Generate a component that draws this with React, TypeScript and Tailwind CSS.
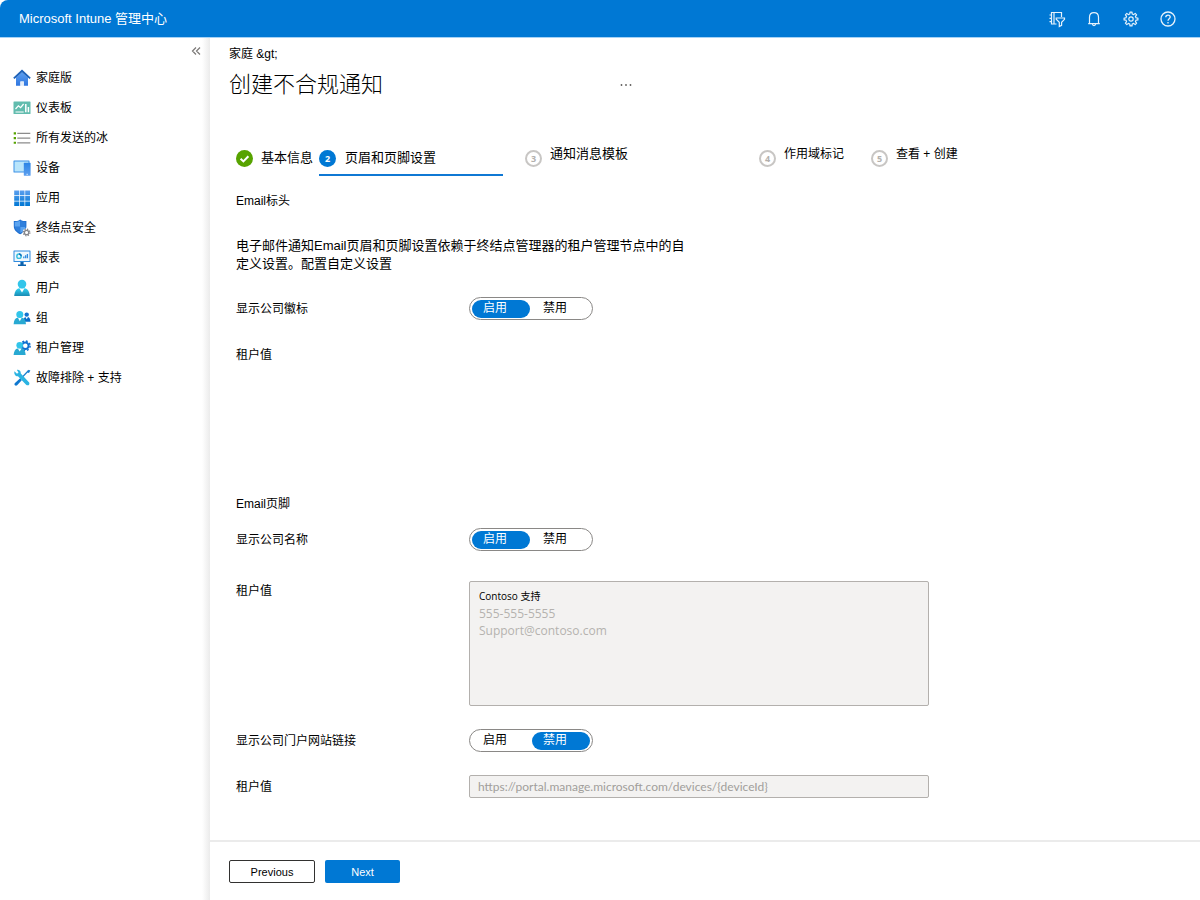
import { useId, useState, type ReactNode } from 'react';

type NavItem = { label: string; icon: ReactNode };

const HomeIcon = () => (
  <svg viewBox="0 0 18 18" className="size-[18px]">
    <defs>
      <linearGradient id="home" x1="0" y1="0" x2="0" y2="1">
        <stop offset="0" stopColor="#5ea0ef" />
        <stop offset="1" stopColor="#2f76e0" />
      </linearGradient>
    </defs>
    <path d="M3 8.5 9 3l6 5.5v8.200h-4.200v-4.200H7.400v4.200H3z" fill="url(#home)" />
    <path d="M7.400 12.500h3.400v4.200H7.400z" fill="#e3ecf8" />
    <path d="M9 .6 17.800 8.700l-1.300 1.300L9 3.300 1.500 10 .2 8.700z" fill="#1f62b8" />
  </svg>
);

const DashboardIcon = () => (
  <svg viewBox="0 0 18 18" className="size-[18px]">
    <rect x=".5" y="2.500" width="17" height="12.500" rx=".6" fill="#62bcae" />
    <path d="M2.500 10 5.400 6.800 7.600 8.600 10.600 5" fill="none" stroke="#fff" strokeWidth="1.200" />
    <path d="M2.500 13h8.200" stroke="#fff" strokeWidth="1" />
    <path d="M12.800 5v8.300M15.400 8v5.300" stroke="#fff" strokeWidth="1.500" />
  </svg>
);

const ListIcon = () => (
  <svg viewBox="0 0 18 18" className="size-[18px]">
    <path d="M4.300 4.400h13M4.300 9.100h13M4.300 13.800h13" stroke="#8c8c8c" strokeWidth="1.300" />
    <path d="M.7 4.400H3M.7 9.100H3M.7 13.800H3" stroke="#57a300" strokeWidth="2.100" />
  </svg>
);

const DevicesIcon = () => (
  <svg viewBox="0 0 18 18" className="size-[18px]">
    <defs>
      <linearGradient id="phone" x1="0" y1="0" x2="0" y2="1">
        <stop offset="0" stopColor="#2a84e6" />
        <stop offset="1" stopColor="#5ea0ef" />
      </linearGradient>
    </defs>
    <rect x=".5" y="1.500" width="16" height="12" rx=".6" fill="#3c91e6" />
    <rect x="1.500" y="2.500" width="14" height="10" fill="#b9e5fb" />
    <rect x="10.800" y="3.800" width="6.800" height="13" rx=".6" fill="url(#phone)" />
    <path d="M13.400 15.300h1.600" stroke="#d6ecff" strokeWidth=".9" />
  </svg>
);

const AppsIcon = () => (
  <svg viewBox="0 0 18 18" className="size-[18px]">
    <defs>
      <linearGradient id="apps" gradientUnits="userSpaceOnUse" x1="0" y1="1" x2="0" y2="17">
        <stop offset="0" stopColor="#5ea0ef" />
        <stop offset="1" stopColor="#0078d4" />
      </linearGradient>
    </defs>
    <path
      d="M1.200 1.400h4.800v4.800H1.200zM6.700 1.400h4.800v4.800H6.700zM12.200 1.400H17v4.800h-4.800zM1.200 6.900h4.800v4.800H1.200zM6.700 6.900h4.800v4.800H6.700zM12.200 6.900H17v4.800h-4.800zM1.200 12.400h4.800v4.600H1.200zM6.700 12.400h4.800v4.600H6.700zM12.200 12.400H17v4.600h-4.800z"
      fill="url(#apps)"
    />
  </svg>
);

const ShieldIcon = () => (
  <svg viewBox="0 0 18 18" className="size-[18px]">
    <path d="M7.200.4c2 1.500 4 1.600 6.200 1.700v5.200c0 4-3.300 6.500-6.200 8C4.200 13.800.8 11.300.8 7.300V2.100C3 2 5.200 1.900 7.200.4z" fill="#1f6fd0" />
    <path d="M7.200 1.500v6.300H1.700V3C3.800 2.900 5.600 2.500 7.200 1.500zM7.200 7.800h5.300c-.2 3-2.900 5-5.300 6.300z" fill="#5ba4f0" />
    <path d="M7.200 1.500c1.600 1 3.300 1.400 5.300 1.500v4.800H7.200zM7.200 7.800v6.300C4.800 12.800 2 10.800 1.700 7.800z" fill="#2f7fdc" />
    <circle cx="13.600" cy="13.500" r="3.900" fill="#fff" />
    <circle cx="13.600" cy="13.500" r="2.200" fill="none" stroke="#85868a" strokeWidth="1.300" />
    <circle cx="13.600" cy="13.500" r="3.300" fill="none" stroke="#85868a" strokeWidth="1.200" strokeDasharray="1.300 1.290" />
  </svg>
);

const ReportsIcon = () => (
  <svg viewBox="0 0 18 18" className="size-[18px]">
    <rect x=".5" y="1.500" width="17" height="11.500" rx=".5" fill="#2f8bdf" />
    <rect x="1.500" y="2.500" width="15" height="9.500" fill="#eef7fd" />
    <circle cx="6" cy="7.200" r="2.200" fill="none" stroke="#32bedd" strokeWidth="1.400" />
    <path d="M6 5a2.200 2.200 0 0 1 2.200 2.200" fill="none" stroke="#0f6cbd" strokeWidth="1.400" />
    <path d="M10.800 9.200V7.400M12.600 9.200V6.200M14.400 9.200V5" stroke="#2f8bdf" strokeWidth="1.300" />
    <path d="M7.400 13h3.200v2.400H13V17H5v-1.600h2.400z" fill="#0b62ad" />
  </svg>
);

const UserIcon = () => (
  <svg viewBox="0 0 18 18" className="size-[18px]">
    <defs>
      <linearGradient id="user" x1="0" y1="0" x2="0" y2="1">
        <stop offset="0" stopColor="#32d4f5" />
        <stop offset="1" stopColor="#198ab3" />
      </linearGradient>
    </defs>
    <path d="M1.200 17c.3-4.600 2.300-7.500 5-7.800h5.600c2.700.3 4.700 3.200 5 7.800z" fill="url(#user)" />
    <path d="M6.400 9.200 9 13.600l2.600-4.400z" fill="#fff" />
    <circle cx="9" cy="5.100" r="4.300" fill="#32c5ea" />
  </svg>
);

const GroupIcon = () => (
  <svg viewBox="0 0 18 18" className="size-[18px]">
    <path d="M10 12.800c.2-3 1.200-4.700 2.600-4.900h2.400c1.400.2 2.400 2 2.600 4.900z" fill="#0a6cc8" />
    <path d="m12.400 7.900 1.300 2.300L15 7.900z" fill="#fff" />
    <circle cx="13.700" cy="5.600" r="2.200" fill="#1272d0" />
    <path d="M.6 15.300c.3-4 1.700-6.200 3.900-6.500h4.600c2.200.3 3.600 2.500 3.900 6.500z" fill="#28a9d2" />
    <path d="m4.900 8.800 1.900 3.400 1.900-3.400z" fill="#fff" />
    <circle cx="6.800" cy="5.400" r="3.500" fill="#32c5ea" />
  </svg>
);

const TenantIcon = () => (
  <svg viewBox="0 0 18 18" className="size-[18px]">
    <circle cx="12.300" cy="6.800" r="3.300" fill="none" stroke="#0f6fd0" strokeWidth="2" />
    <circle cx="12.300" cy="6.800" r="4.800" fill="none" stroke="#0f6fd0" strokeWidth="1.500" strokeDasharray="1.900 1.870" />
    <path d="M.6 16c.3-4.100 1.700-6.300 3.900-6.600h4.300c2.200.3 3.600 2.500 3.900 6.600z" fill="#28a9d2" />
    <path d="m4.800 9.400 1.900 3.200 1.900-3.200z" fill="#fff" />
    <circle cx="6.700" cy="6.200" r="3.300" fill="#32c5ea" />
  </svg>
);

const ToolsIcon = () => (
  <svg viewBox="0 0 18 18" className="size-[18px]">
    <path d="M15.800 1.200 4.200 13.600" stroke="#1a7fd0" strokeWidth="1.300" />
    <path d="m6.900 9.400 1.900 1.900-4.700 4.900c-.7.700-1.600.6-2.200 0s-.6-1.500.1-2.200z" fill="#0f78d0" />
    <path d="m16.800.9.500.6-1 2-1.200.6-.8-.8.600-1.300z" fill="#1a7fd0" />
    <path
      d="M1.500 2.200 4 4.700l1.500-1.200L3.900.9c2-.5 4 1 3.900 3.500l7.900 8.500c2 2.200-.5 4.700-2.600 2.800L5 7.300C2.700 7.600.6 5.200 1.500 2.200z"
      fill="#2cb4e2"
    />
  </svg>
);

const DirectoryFilterIcon = () => (
  <svg viewBox="0 0 18 18" className="size-[18px]" fill="none" stroke="currentColor" strokeWidth="1.200">
    <path d="M13.500 7V2.500H3.500v11.500h5M6 2.500V14M1.500 5h2M1.500 8.300h2M1.500 11.600h2" />
    <path d="M8.200 8h8.300v1.300l-2.900 3v3l-2.300 1.200v-4.200l-3.100-3z" />
  </svg>
);

const BellIcon = () => (
  <svg viewBox="0 0 18 18" className="size-[18px]" fill="none" stroke="currentColor" strokeWidth="1.200">
    <path d="M4.500 13.500V7.300C4.500 4.500 6.400 2.700 9 2.700s4.500 1.800 4.500 4.600v6.200M3.200 13.700h11.600M7.300 14c.2 1.100.8 1.600 1.700 1.600s1.500-.5 1.700-1.600" />
  </svg>
);

const GearIcon = () => (
  <svg viewBox="0 0 18 18" className="size-[18px]" fill="none" stroke="currentColor" strokeWidth="1.200" strokeLinejoin="round">
    <path d="m7.800 4 .2-1.900h2L10.200 4l1.500.6 1.500-1.200 1.400 1.400-1.200 1.500.6 1.500 1.900.2v2l-1.900.2-.6 1.500 1.200 1.500-1.400 1.400-1.500-1.200-1.500.6-.2 1.900H8L7.800 14l-1.500-.6-1.500 1.200-1.400-1.400 1.200-1.500-.6-1.500L2.100 10V8L4 7.800l.6-1.500-1.200-1.500 1.400-1.400 1.500 1.200z" />
    <circle cx="9" cy="9" r="2.200" />
  </svg>
);

const HelpIcon = () => (
  <svg viewBox="0 0 18 18" className="size-[18px]" fill="none" stroke="currentColor" strokeWidth="1.300">
    <circle cx="9" cy="9" r="7" />
    <path d="M6.800 7.300c0-1.300.9-2.200 2.200-2.200s2.200.8 2.200 2c0 1.600-2.200 1.700-2.200 3.600" />
    <path d="M9 11.900v1.500" />
  </svg>
);

const navItems: NavItem[] = [
  { label: '家庭版', icon: <HomeIcon /> },
  { label: '仪表板', icon: <DashboardIcon /> },
  { label: '所有发送的冰', icon: <ListIcon /> },
  { label: '设备', icon: <DevicesIcon /> },
  { label: '应用', icon: <AppsIcon /> },
  { label: '终结点安全', icon: <ShieldIcon /> },
  { label: '报表', icon: <ReportsIcon /> },
  { label: '用户', icon: <UserIcon /> },
  { label: '组', icon: <GroupIcon /> },
  { label: '租户管理', icon: <TenantIcon /> },
  { label: '故障排除 + 支持', icon: <ToolsIcon /> },
];

const headerActions = [
  { label: '目录', icon: <DirectoryFilterIcon /> },
  { label: '通知', icon: <BellIcon /> },
  { label: '设置', icon: <GearIcon /> },
  { label: '帮助', icon: <HelpIcon /> },
];

function ToggleRow({ label, initial }: { label: string; initial: '启用' | '禁用' }) {
  const id = useId();
  const [value, setValue] = useState<string>(initial);
  return (
    <div className="flex items-center">
      <span id={id} className="w-[233px] shrink-0">
        {label}
      </span>
      <div
        role="radiogroup"
        aria-labelledby={id}
        className="flex h-[23px] w-[124px] items-center justify-between rounded-full border border-[#8a8886] bg-white px-[2px]"
      >
        {['启用', '禁用'].map((option) => (
          <label
            key={option}
            className={
              value === option
                ? 'relative h-[18px] w-[58px] cursor-pointer rounded-full bg-[#0078d4] pl-[11px] leading-4 text-white'
                : 'relative h-[18px] w-[58px] cursor-pointer rounded-full pl-[11px] leading-4'
            }
          >
            <input
              type="radio"
              name={id}
              className="sr-only"
              checked={value === option}
              onChange={() => setValue(option)}
            />
            {option}
          </label>
        ))}
      </div>
    </div>
  );
}

function PendingStep({ number, label }: { number: number; label: string }) {
  return (
    <button type="button" className="flex h-8 items-center gap-2">
      <span className="flex size-[17px] items-center justify-center rounded-full border-2 border-[#c8c6c4] font-['Open_Sans','Noto_Sans_CJK_SC',sans-serif] text-[9px] font-bold leading-none text-[#b3b0ad]">
        {number}
      </span>
      <span className="pb-2">{label}</span>
    </button>
  );
}

export default function App() {
  return (
    <div className="flex min-h-screen flex-col bg-white font-['Liberation_Sans','Noto_Sans_CJK_SC',sans-serif] text-xs leading-4 text-black">
      <header className="flex h-[38px] items-center justify-between rounded-tl-lg border-b border-[#a6d2f5] bg-[#0078d4] pl-[19px] pr-[23px] text-white">
        <span className="text-[13px]">Microsoft Intune 管理中心</span>
        <div className="flex gap-[19px]">
          {headerActions.map((action) => (
            <button key={action.label} type="button" aria-label={action.label} className="text-[#e6f2fb]">
              {action.icon}
            </button>
          ))}
        </div>
      </header>

      <div className="flex grow">
        <aside className="flex w-[210px] shrink-0">
          <div className="grow">
            <div className="flex h-[25px] items-center justify-end pr-px">
              <button type="button" aria-label="折叠菜单" className="text-[#7a7876]">
                <svg viewBox="0 0 10 10" className="size-[10px]" fill="none" stroke="currentColor" strokeWidth="1.200">
                  <path d="M5 1.500 1.500 5 5 8.500M9 1.500 5.500 5 9 8.500" />
                </svg>
              </button>
            </div>
            <nav>
              <ul>
                {navItems.map((item) => (
                  <li key={item.label}>
                    <a href="#" className="flex h-[30px] items-center gap-[5px] pl-[13px]">
                      {item.icon}
                      {item.label}
                    </a>
                  </li>
                ))}
              </ul>
            </nav>
          </div>
          <div className="w-2 bg-linear-to-r from-white to-[#ebebeb]" />
        </aside>

        <main className="flex min-w-0 grow flex-col">
          <div className="grow pb-[42px] pl-[26px] pt-2">
            <div className="-ml-[7px]">
              <nav>
                <a href="#">家庭 &amp;gt;</a>
              </nav>
              <div className="mt-[7px] flex h-8 items-center">
                <h1 className="w-[391px] text-[22px] font-light leading-8">创建不合规通知</h1>
                <button type="button" aria-label="更多" className="text-[#605e5c]">
                  <svg viewBox="0 0 12 4" className="h-1 w-3" fill="currentColor">
                    <circle cx="1.500" cy="2" r=".9" />
                    <circle cx="6" cy="2" r=".9" />
                    <circle cx="10.500" cy="2" r=".9" />
                  </svg>
                </button>
              </div>
            </div>

            <ol className="mt-[41px] flex text-[13px]">
              <li className="w-[83px]">
                <button type="button" className="flex h-8 items-center gap-2">
                  <svg viewBox="0 0 17 17" className="size-[17px]">
                    <circle cx="8.500" cy="8.500" r="8.500" fill="#57a300" />
                    <path d="m4.600 8.700 2.800 2.700 5-5.200" fill="none" stroke="#fff" strokeWidth="2" />
                  </svg>
                  基本信息
                </button>
              </li>
              <li className="w-[184px] border-b-2 border-[#0f78d4]">
                <button type="button" aria-current="step" className="flex h-8 items-center gap-[9px]">
                  <span className="flex size-[17px] items-center justify-center rounded-full bg-[#0078d4] font-['Open_Sans','Noto_Sans_CJK_SC',sans-serif] text-[9px] font-bold leading-none text-white">
                    2
                  </span>
                  页眉和页脚设置
                </button>
              </li>
              <li className="ml-[22px] w-[234px]">
                <PendingStep number={3} label="通知消息模板" />
              </li>
              <li className="w-[112px] text-xs">
                <PendingStep number={4} label="作用域标记" />
              </li>
              <li className="text-xs">
                <PendingStep number={5} label="查看 + 创建" />
              </li>
            </ol>

            <h2 className="mt-[17px]">Email标头</h2>
            <p className="mt-7 max-w-[454px] text-[13px] leading-[18px]">
              电子邮件通知Email页眉和页脚设置依赖于终结点管理器的租户管理节点中的自定义设置。配置自定义设置
            </p>
            <div className="mt-6">
              <ToggleRow label="显示公司徽标" initial="启用" />
            </div>
            <p className="mt-[27px]">租户值</p>

            <h2 className="mt-[133px]">Email页脚</h2>
            <div className="mt-4">
              <ToggleRow label="显示公司名称" initial="启用" />
            </div>
            <div className="mt-[30px] flex items-start">
              <label htmlFor="footer-value" className="w-[233px] shrink-0 pt-[2px]">
                租户值
              </label>
              <div className="h-[125px] w-[460px] rounded-xs border border-[#b3b0ad] bg-[#f3f2f1] px-[9px] py-[6px] leading-[17px]">
                <p className="font-['Open_Sans','Noto_Sans_CJK_SC',sans-serif] text-[10px]">Contoso 支持</p>
                <textarea
                  id="footer-value"
                  readOnly
                  className="block h-[94px] w-full resize-none bg-transparent font-['Open_Sans','Noto_Sans_CJK_SC',sans-serif] leading-[17px] text-[#b5b2af] outline-none"
                  value={'555-555-5555\nSupport@contoso.com'}
                />
              </div>
            </div>
            <div className="mt-[23px]">
              <ToggleRow label="显示公司门户网站链接" initial="禁用" />
            </div>
            <div className="mt-[23px] flex items-center">
              <label htmlFor="portal-value" className="w-[233px] shrink-0">
                租户值
              </label>
              <input
                id="portal-value"
                readOnly
                value="https://portal.manage.microsoft.com/devices/{deviceId}"
                className="h-[23px] w-[460px] rounded-xs border border-[#b3b0ad] bg-[#f3f2f1] px-2 font-['Lato','Noto_Sans_CJK_SC',sans-serif] text-[#a19e9b] outline-none"
              />
            </div>
          </div>

          <footer className="flex gap-[10px] border-t-2 border-[#ebebeb] pb-[18px] pl-[19px] pt-[18px] text-[11px]">
            <button type="button" className="h-[23px] w-[86px] rounded-xs border border-[#323130] bg-white">
              Previous
            </button>
            <button type="button" className="h-[23px] w-[75px] rounded-xs bg-[#0078d4] text-white">
              Next
            </button>
          </footer>
        </main>
      </div>
    </div>
  );
}
